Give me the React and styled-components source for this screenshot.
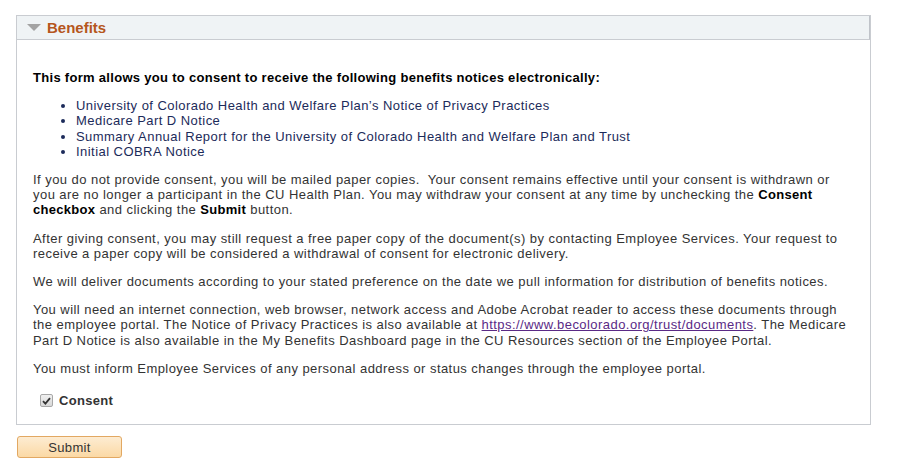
import React from "react";
import styled, { createGlobalStyle } from "styled-components";

const Global = createGlobalStyle`
  html, body { margin: 0; padding: 0; background: #fff; }
  body { font-family: "Liberation Sans", Arial, sans-serif; font-size: 13px; color: #333; }
`;

const Page = styled.div`
  padding: 15px 0 0 16px;
  width: 855px;
`;

const Panel = styled.section`
  border: 1px solid #c9ccd1;
  background: #fff;
`;

const Header = styled.div`
  display: flex;
  align-items: center;
  gap: 6px;
  height: 23px;
  padding-left: 10px;
  background: #eff3f5;
  border-bottom: 1px solid #c9ccd1;
  border-right: 1px solid #bfc3c9;
`;

const Title = styled.h2`
  margin: 0;
  font-size: 15px;
  font-weight: bold;
  color: #b5561c;
  line-height: 17px;
`;

const Body = styled.div`
  padding: 17px 17px 16px 16px;
  line-height: 15.2px;
  letter-spacing: 0.45px;
`;

const Lead = styled.p`
  margin: 13px 0;
  font-weight: bold;
  color: #000;
  letter-spacing: 0.3px;
`;

const List = styled.ul`
  margin: 13px 0;
  padding-left: 43px;
  color: #1c2b5a;
`;

const Para = styled.p`
  margin: 13px 0;
  b { color: #000; letter-spacing: 0.3px; }
`;

const Link = styled.a`
  color: #5a2a86;
  text-decoration: underline;
`;

const ConsentRow = styled.label`
  display: flex;
  align-items: center;
  gap: 6px;
  margin: 17px 0 0 7px;
  font-weight: bold;
  color: #333;
  letter-spacing: 0.3px;
`;

const Box = styled.span`
  display: inline-flex;
  align-items: center;
  justify-content: center;
  width: 11px;
  height: 11px;
  border: 1px solid #a8a8a8;
  border-radius: 2px;
  background: linear-gradient(#f0f0f0, #d8d8d8);
`;

const SubmitButton = styled.button`
  margin-top: 11px;
  margin-left: 1px;
  width: 105px;
  height: 22px;
  font-family: "Liberation Sans", Arial, sans-serif;
  font-size: 13px;
  letter-spacing: 0.3px;
  color: #333;
  background: linear-gradient(#fdecd2, #fbd9a5);
  border: 1px solid #e2a862;
  border-radius: 3px;
  padding: 0;
`;

const Caret = () => (
  <svg width="14" height="8" viewBox="0 0 14 8">
    <polygon points="0,0 14,0 7,7" fill="#a3a3a3" />
  </svg>
);

export default function App() {
  return (
    <>
      <Global />
      <Page>
        <Panel>
          <Header>
            <Caret />
            <Title>Benefits</Title>
          </Header>
          <Body>
            <Lead>This form allows you to consent to receive the following benefits notices electronically:</Lead>
            <List>
              <li>University of Colorado Health and Welfare Plan’s Notice of Privacy Practices</li>
              <li>Medicare Part D Notice</li>
              <li>Summary Annual Report for the University of Colorado Health and Welfare Plan and Trust</li>
              <li>Initial COBRA Notice</li>
            </List>
            <Para>
              If you do not provide consent, you will be mailed paper copies.&nbsp; Your consent remains effective until your consent is withdrawn or you are no longer a participant in the CU Health Plan. You may withdraw your consent at any time by unchecking the <b>Consent checkbox</b> and clicking the <b>Submit</b> button.
            </Para>
            <Para>
              After giving consent, you may still request a free paper copy of the document(s) by contacting Employee Services. Your request to receive a paper copy will be considered a withdrawal of consent for electronic delivery.
            </Para>
            <Para>
              We will deliver documents according to your stated preference on the date we pull information for distribution of benefits notices.
            </Para>
            <Para>
              You will need an internet connection, web browser, network access and Adobe Acrobat reader to access these documents through the employee portal. The Notice of Privacy Practices is also available at <Link href="#">https://www.becolorado.org/trust/documents</Link>. The Medicare Part D Notice is also available in the My Benefits Dashboard page in the CU Resources section of the Employee Portal.
            </Para>
            <Para>
              You must inform Employee Services of any personal address or status changes through the employee portal.
            </Para>
            <ConsentRow>
              <Box>
                <svg width="9" height="8" viewBox="0 0 9 8">
                  <path d="M1 4.2 L3.4 6.6 L8 1.2" fill="none" stroke="#333" strokeWidth="1.8" />
                </svg>
              </Box>
              Consent
            </ConsentRow>
          </Body>
        </Panel>
        <SubmitButton>Submit</SubmitButton>
      </Page>
    </>
  );
}
